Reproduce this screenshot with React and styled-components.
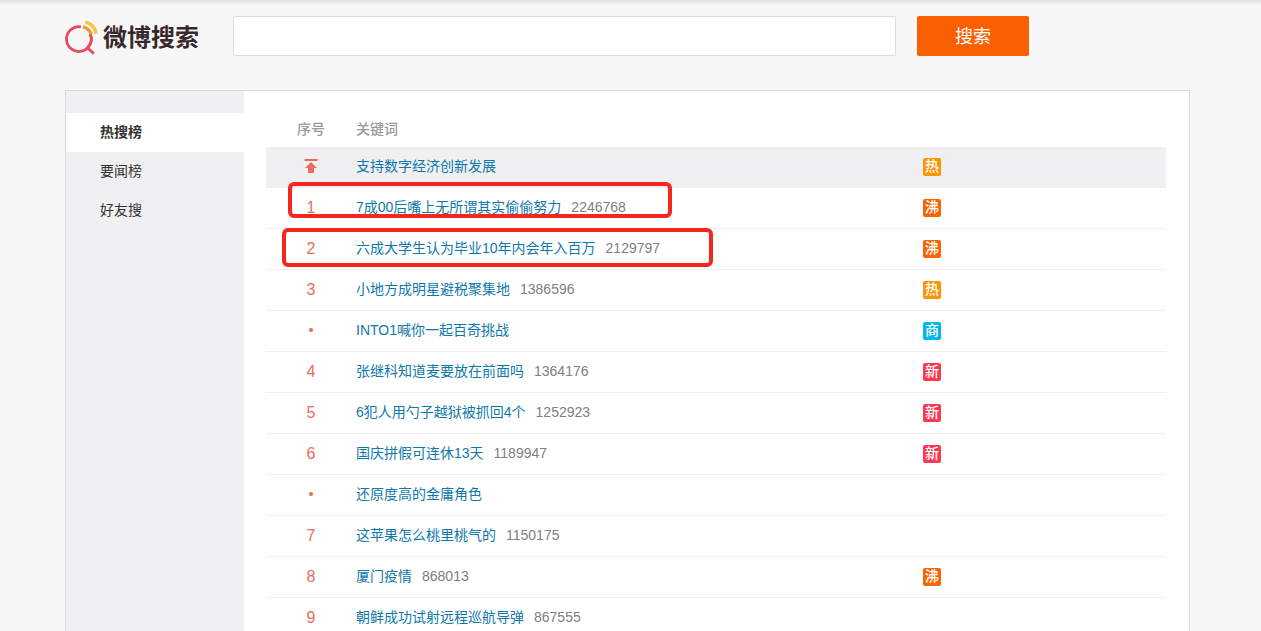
import React, { useState } from 'react';
import styled, { createGlobalStyle } from 'styled-components';

const GlobalStyle = createGlobalStyle`
	* {
		box-sizing: border-box;
	}
	body {
		margin: 0;
		background-color: #f7f7f7;
		color: #333;
		font-family: 'Liberation Sans', 'Noto Sans CJK SC', sans-serif;
		font-size: 14px;
		line-height: 20px;
	}
`;

const Page = styled.div`
	min-height: 100vh;
	display: flex;
	flex-direction: column;
	padding: 0 71px 0 65px;
	background: linear-gradient(#e4e4e4, #e8e8e8 2px, #f7f7f7 5px);
`;

const Header = styled.header`
	display: flex;
	align-items: center;
	padding: 16px 161px 34px 0;
`;

const Logo = styled.a`
	width: 168px;
	display: flex;
	align-items: center;
	gap: 4px;
	padding-top: 3px;
	color: #37292a;
	font-size: 24px;
	font-weight: 700;
	line-height: 37px;
	text-decoration: none;
	white-space: nowrap;
`;

const SearchForm = styled.form`
	flex: 1;
	display: flex;
	gap: 21px;
`;

const SearchInput = styled.input`
	flex: 1;
	min-width: 0;
	height: 40px;
	padding: 0 12px;
	border: 1px solid #dcdcdc;
	border-radius: 2px;
	background-color: #fff;
	font-size: 16px;
	outline: none;
`;

const SearchButton = styled.button`
	width: 112px;
	height: 40px;
	padding: 0 0 2px;
	border: none;
	border-radius: 2px;
	background-color: #fa5f00;
	color: #fff;
	font-family: inherit;
	font-size: 18px;
	cursor: pointer;
`;

const Panel = styled.main`
	flex: 1;
	display: flex;
	border: 1px solid #d9d9d9;
	border-bottom: none;
	background-color: #fff;
`;

const Sidebar = styled.nav`
	width: 178px;
	padding-top: 22px;
	background-color: #f0f0f2;
`;

const SideLink = styled.a`
	display: block;
	padding-left: 34px;
	line-height: 39px;
	color: #333;
	background-color: ${(props) => (props.$active ? '#fff' : 'transparent')};
	font-weight: ${(props) => (props.$active ? 700 : 400)};
	text-decoration: none;
`;

const Content = styled.section`
	position: relative;
	flex: 1;
	padding: 20px 23px 0 22px;
`;

const HotTable = styled.table`
	width: 100%;
	table-layout: fixed;
	border-collapse: separate;
	border-spacing: 0;
`;

const HeadCell = styled.th`
	width: ${(props) => props.$width};
	height: 36px;
	padding: 0;
	color: #999;
	font-weight: 500;
	text-align: ${(props) => props.$align || 'left'};
`;

const Row = styled.tr`
	background-color: ${(props) => (props.$top ? '#f0f0f2' : '#fff')};
`;

const Cell = styled.td`
	height: 41px;
	padding: 0 0 2px;
	border-bottom: 1px solid #f0f0f0;
	vertical-align: middle;
	white-space: nowrap;
`;

const RankCell = styled(Cell)`
	padding: 0;
	color: #ee6a5e;
	font-size: 16px;
	text-align: center;

	svg {
		display: block;
		margin: 0 auto 2px;
	}
`;

const BadgeCell = styled(Cell)`
	padding: 0;
`;

const Keyword = styled.a`
	color: #0f78ab;
	text-decoration: none;
`;

const Heat = styled.span`
	margin-left: 10px;
	color: #808080;
`;

const badgeColors = {
	热: '#ff9406',
	沸: '#f86400',
	商: '#00b7ee',
	新: '#ff3852',
};

const Badge = styled.span`
	display: block;
	width: 18px;
	height: 18px;
	border-radius: 2px;
	background-color: ${(props) => badgeColors[props.$type]};
	color: #fff;
	font-weight: 500;
	line-height: 17px;
	text-align: center;
`;

// Hand-drawn marker laid over the table
const Marker = styled.div`
	position: absolute;
	top: ${(props) => props.$top}px;
	left: ${(props) => props.$left}px;
	width: ${(props) => props.$width}px;
	height: ${(props) => props.$height}px;
	border: 4px solid #f5261d;
	border-radius: 6px;
	pointer-events: none;
`;

const menu = ['热搜榜', '要闻榜', '好友搜'];

const topics = [
	{ rank: 'top', title: '支持数字经济创新发展', badge: '热' },
	{ rank: '1', title: '7成00后嘴上无所谓其实偷偷努力', heat: 2246768, badge: '沸' },
	{ rank: '2', title: '六成大学生认为毕业10年内会年入百万', heat: 2129797, badge: '沸' },
	{ rank: '3', title: '小地方成明星避税聚集地', heat: 1386596, badge: '热' },
	{ rank: 'dot', title: 'INTO1喊你一起百奇挑战', badge: '商' },
	{ rank: '4', title: '张继科知道麦要放在前面吗', heat: 1364176, badge: '新' },
	{ rank: '5', title: '6犯人用勺子越狱被抓回4个', heat: 1252923, badge: '新' },
	{ rank: '6', title: '国庆拼假可连休13天', heat: 1189947, badge: '新' },
	{ rank: 'dot', title: '还原度高的金庸角色' },
	{ rank: '7', title: '这苹果怎么桃里桃气的', heat: 1150175 },
	{ rank: '8', title: '厦门疫情', heat: 868013, badge: '沸' },
	{ rank: '9', title: '朝鲜成功试射远程巡航导弹', heat: 867555 },
];

const LogoIcon = () => (
	<svg width="34" height="36" viewBox="0 0 34 36" fill="none" aria-hidden="true">
		<path d="M16 6.9A12.4 12.4 0 1 0 25.2 14" stroke="#e94b5b" strokeWidth="2.8" />
		<path d="M25.2 14A12.4 12.4 0 0 1 22.4 27.8L28.8 33.6" stroke="#e94b5b" strokeWidth="2.8" />
		<path d="M18 6.9C21.8 7.8 24.5 10.2 26.4 14.2" stroke="#f29a38" strokeWidth="3.4" />
		<path d="M20.5 2.2C26 3.4 30 7.6 31 13.6" stroke="#f8c43c" strokeWidth="3.4" />
	</svg>
);

const RankMark = ({ rank }) => {
	if (rank === 'top') {
		return (
			<svg width="14" height="14" viewBox="0 0 14 14" fill="#f0695f" role="img" aria-label="置顶">
				<path d="M0.5 0h13v2h-13zM7 3l6 6h-3v5H4V9H1z" />
			</svg>
		);
	}
	if (rank === 'dot') {
		return (
			<svg width="4" height="4" viewBox="0 0 4 4" fill="#ee6a5e" aria-hidden="true">
				<circle cx="2" cy="2" r="2" />
			</svg>
		);
	}
	return rank;
};

const App = () => {
	const [active, setActive] = useState('热搜榜');
	const [keyword, setKeyword] = useState('');

	return (
		<Page>
			<GlobalStyle />
			<Header>
				<Logo href="#">
					<LogoIcon />
					微博搜索
				</Logo>
				<SearchForm onSubmit={(e) => e.preventDefault()}>
					<SearchInput
						type="text"
						aria-label="搜索"
						value={keyword}
						onChange={(e) => setKeyword(e.target.value)}
					/>
					<SearchButton type="submit">搜索</SearchButton>
				</SearchForm>
			</Header>
			<Panel>
				<Sidebar>
					{menu.map((item) => (
						<SideLink key={item} href="#" $active={item === active} onClick={() => setActive(item)}>
							{item}
						</SideLink>
					))}
				</Sidebar>
				<Content>
					<HotTable>
						<thead>
							<tr>
								<HeadCell $width="10%" $align="center">序号</HeadCell>
								<HeadCell $width="63%">关键词</HeadCell>
								<HeadCell $width="27%" />
							</tr>
						</thead>
						<tbody>
							{topics.map((topic) => (
								<Row key={topic.title} $top={topic.rank === 'top'}>
									<RankCell>
										<RankMark rank={topic.rank} />
									</RankCell>
									<Cell>
										<Keyword href="#">{topic.title}</Keyword>
										{topic.heat && <Heat>{topic.heat}</Heat>}
									</Cell>
									<BadgeCell>{topic.badge && <Badge $type={topic.badge}>{topic.badge}</Badge>}</BadgeCell>
								</Row>
							))}
						</tbody>
					</HotTable>
					<Marker $top={91} $left={44} $width={384} $height={36} />
					<Marker $top={137} $left={38} $width={431} $height={39} />
				</Content>
			</Panel>
		</Page>
	);
};

export default App;
